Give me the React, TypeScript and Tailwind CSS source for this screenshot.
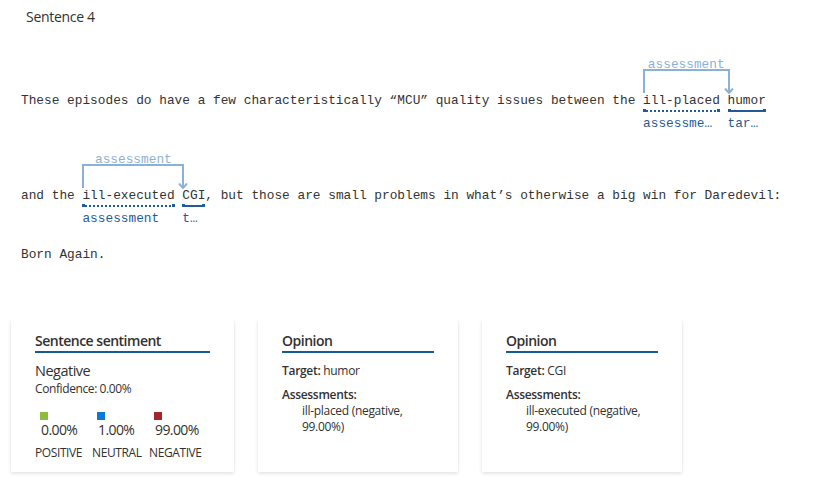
import { ReactNode } from 'react'

type Tok = {
  text: string
  kind?: 'assess' | 'target'
  label?: string
  arc?: string
}

const lines: { pad: string; toks: Tok[] }[] = [
  {
    pad: 'pt-[67px]',
    toks: [
      { text: 'These episodes do have a few characteristically “MCU” quality issues between the ' },
      { text: 'ill-placed', kind: 'assess', label: 'assessment', arc: 'w-[calc(11ch+2px)]' },
      { text: ' ' },
      { text: 'humor', kind: 'target', label: 'target' },
    ],
  },
  {
    pad: 'pt-[56px]',
    toks: [
      { text: 'and the ' },
      { text: 'ill-executed', kind: 'assess', label: 'assessment', arc: 'w-[calc(13ch+2px)]' },
      { text: ' ' },
      { text: 'CGI', kind: 'target', label: 'target' },
      { text: ', but those are small problems in what’s otherwise a big win for Daredevil:' },
    ],
  },
  { pad: 'pt-[20px]', toks: [{ text: 'Born Again.' }] },
]

function Underline({ dotted }: { dotted: boolean }) {
  return (
    <span className="flex h-[3px] items-center">
      <span className="h-[3px] w-[3px] bg-[#1f5b98]" />
      <span
        className={
          dotted
            ? 'h-[2px] flex-1 bg-[repeating-linear-gradient(90deg,#1f5b98_0_2px,transparent_2px_4px)]'
            : 'h-[2px] flex-1 bg-[#1f5b98]'
        }
      />
      <span className="h-[3px] w-[3px] bg-[#1f5b98]" />
    </span>
  )
}

function Arc({ width, label }: { width: string; label: string }) {
  return (
    <span className={`absolute bottom-full left-0 h-[24px] border-2 border-b-0 border-[#8cb1d7] ${width}`}>
      <span className="absolute -top-[14px] left-0 right-0 text-center leading-[16px] text-[#8cb1d7]">
        {label}
      </span>
      <svg className="absolute -bottom-[1px] -right-[6px]" width="10" height="6" viewBox="0 0 10 6">
        <polyline points="1,0.5 5,5 9,0.5" fill="none" stroke="#8cb1d7" strokeWidth="2" />
      </svg>
    </span>
  )
}

function Token({ t }: { t: Tok }) {
  if (!t.kind) return <span className="whitespace-pre leading-[16px]">{t.text}</span>
  return (
    <span className="relative flex flex-col">
      {t.arc && <Arc width={t.arc} label="assessment" />}
      <span className="whitespace-pre leading-[16px]">{t.text}</span>
      <Underline dotted={t.kind === 'assess'} />
      <span className="mt-[4px] w-0 min-w-full truncate pr-[4px] leading-[16px] text-[#1f5b98]">
        {t.label}
      </span>
    </span>
  )
}

function Card({ width, title, children }: { width: string; title: string; children: ReactNode }) {
  return (
    <div
      className={`h-[153px] bg-white px-[24px] pt-[12px] shadow-[0_1.6px_3.6px_0_rgba(0,0,0,0.13),0_0.3px_0.9px_0_rgba(0,0,0,0.11)] ${width}`}
    >
      <div className="border-b-2 border-[#155a9b] text-[14px] font-semibold leading-[20px] tracking-[-0.5px]">
        {title}
      </div>
      {children}
    </div>
  )
}

function OpinionBody({ target, assessment }: { target: string; assessment: string }) {
  return (
    <div className="text-[12px] leading-[16px] tracking-[-0.3px]">
      <div className="mt-[10px]">
        <span className="font-semibold">Target:</span> {target}
      </div>
      <div className="mt-[8px] font-semibold">Assessments:</div>
      <div className="pl-[20px]">{assessment} (negative, 99.00%)</div>
    </div>
  )
}

const scores = [
  { color: 'bg-[#8cbd3f]', pct: '0.00%', label: 'POSITIVE' },
  { color: 'bg-[#0f78d4]', pct: '1.00%', label: 'NEUTRAL' },
  { color: 'bg-[#a4262c]', pct: '99.00%', label: 'NEGATIVE' },
]

export default function App() {
  return (
    <div className="min-h-screen w-[815px] bg-white text-[#323130] font-['Segoe_UI','Open_Sans',sans-serif]">
      <div className="pl-[26px] pt-[8px] text-[14px] leading-[18px] tracking-[-0.3px]">Sentence 4</div>

      <div className="pl-[21px] text-[12.8px] text-[#333333] font-['Liberation_Mono',monospace]">
        {lines.map((line, i) => (
          <div key={i} className={`flex items-start ${line.pad}`}>
            {line.toks.map((t, j) => (
              <Token key={j} t={t} />
            ))}
          </div>
        ))}
      </div>

      <div className="mt-[56px] flex gap-[24px] pl-[11px]">
        <Card width="w-[223px]" title="Sentence sentiment">
          <div className="mt-[8px] text-[14.5px] leading-[20px] tracking-[-0.5px]">Negative</div>
          <div className="text-[12px] leading-[16px] tracking-[-0.4px]">Confidence: 0.00%</div>
          <div className="mt-[15px] grid grid-cols-[57px_57px_auto]">
            {scores.map((s) => (
              <div key={s.label} className="flex flex-col">
                <span className={`ml-[5px] h-[8px] w-[8px] ${s.color}`} />
                <span className="ml-[6px] mt-[1px] text-[14px] leading-[18px] tracking-[-0.6px]">{s.pct}</span>
                <span className="mt-[6px] text-[12px] leading-[16px] tracking-[-0.4px]">{s.label}</span>
              </div>
            ))}
          </div>
        </Card>
        <Card width="w-[200px]" title="Opinion">
          <OpinionBody target="humor" assessment="ill-placed" />
        </Card>
        <Card width="w-[200px]" title="Opinion">
          <OpinionBody target="CGI" assessment="ill-executed" />
        </Card>
      </div>
    </div>
  )
}
